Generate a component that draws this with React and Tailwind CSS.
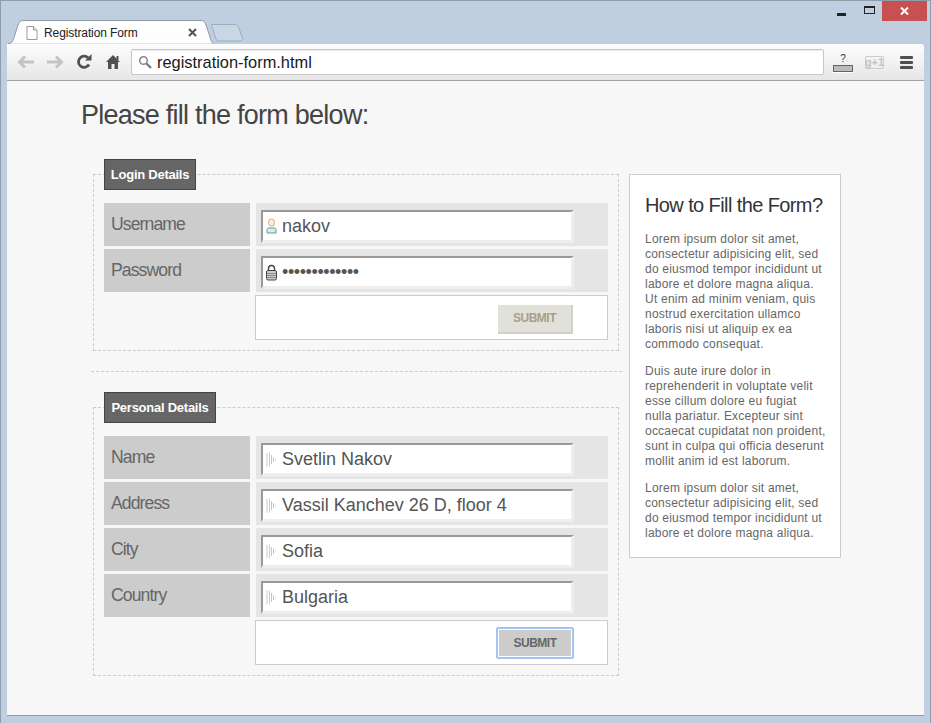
import React from "react";

const arial = "font-['Liberation_Sans',Arial,sans-serif]";

function UserIcon() {
  return (
    <svg width="11" height="16" viewBox="0 0 11 16" className="shrink-0">
      <ellipse cx="5.5" cy="4.5" rx="3" ry="3.7" fill="#fbeee0" stroke="#e0a878" />
      <path d="M1 15V11.5C1 10.5 2 10 3 10H8C9 10 10 10.500 10 11.500V15Z" fill="#d8ece8" stroke="#5f9c98" />
    </svg>
  );
}

function LockIcon() {
  return (
    <svg width="11" height="17" viewBox="0 0 11 17" className="shrink-0">
      <path d="M2.500 7V4.500C2.500 2.500 3.800 1.500 5.500 1.500S8.500 2.500 8.500 4.500V7" fill="none" stroke="#444" strokeWidth="1.400" />
      <rect x="0.500" y="6.500" width="10" height="9.500" rx="1.500" fill="#ccc" stroke="#444" />
      <path d="M1 9.500H10M1 11.500H10M1 13.500H10" stroke="#888" />
    </svg>
  );
}

function FieldIcon() {
  return (
    <svg width="11" height="15" viewBox="0 0 11 15" className="shrink-0">
      <path d="M1 0.500V14.500M3.500 0.500V14.500" stroke="#ccc" fill="none" />
      <path d="M5.500 3V12M7.500 5V10" stroke="#c4c4c4" fill="none" />
      <path d="M9.500 6.500V8.500" stroke="#ddd" fill="none" />
    </svg>
  );
}

function Row({ label, value, icon, dots }) {
  return (
    <div className="flex h-[43px] gap-[6px]">
      <div className={`w-[146px] bg-[#cccccc] pl-[7px] pt-[10px] text-[17.6px] leading-[22px] tracking-[-0.9px] text-[#666666] ${arial}`}>
        {label}
      </div>
      <div className="w-[352px] bg-[#e5e5e5] pl-[5px] pt-[7px]">
        <div className="flex h-[33px] w-[313px] items-center border-t-2 border-l-2 border-r-[3px] border-b-[3px] border-t-[#999999] border-l-[#999999] border-r-[#eeeeee] border-b-[#eeeeee] bg-white pl-[3px]">
          {icon}
          <span className={`ml-[5px] text-[18px] leading-[24px] text-[#555555] ${arial} ${dots ? "tracking-[-0.4px]" : ""}`}>{value}</span>
        </div>
      </div>
    </div>
  );
}

function Fieldset({ legend, legendWidth, children }) {
  return (
    <fieldset className="ml-[2px] w-[526px] border border-dashed border-[#cccccc] px-[10px] pb-[10px] pt-[13px]">
      <legend className={`flex h-[31px] items-center justify-center border border-[#444444] bg-[#666666] text-[13px] font-bold tracking-[-0.25px] text-white ${legendWidth} ${arial}`}>
        {legend}
      </legend>
      <div className="flex flex-col gap-[3px]">{children}</div>
    </fieldset>
  );
}

function SubmitBox({ focused }) {
  return (
    <div className="ml-[151px] flex h-[45px] w-[353px] items-center justify-end border border-[#cccccc] bg-white pr-[33px]">
      {focused ? (
        <button className={`h-[32px] w-[78px] rounded-[2px] border-2 border-[#a3c3f5] bg-[#cccccc] text-[12px] font-bold tracking-[-0.5px] text-[#666666] outline outline-1 -outline-offset-3 outline-white ${arial}`}>
          SUBMIT
        </button>
      ) : (
        <button className={`mr-[1px] mt-[3px] h-[29px] w-[75px] border-b-2 border-r-2 border-[#d2d1c9] bg-[#e1e0d9] text-[12px] font-bold tracking-[-0.5px] text-[#a89f88] ${arial}`}>
          SUBMIT
        </button>
      )}
    </div>
  );
}

function Tab() {
  return (
    <div className="relative ml-[7px] h-[24px] w-[206px]">
      <svg className="absolute inset-0" width="206" height="24" viewBox="0 0 206 24">
        <defs>
          <linearGradient id="tb" x1="0" y1="0" x2="0" y2="1">
            <stop offset="0" stopColor="#ffffff" />
            <stop offset="1" stopColor="#fdfdfd" />
          </linearGradient>
        </defs>
        <path d="M0 23.500C4 23.500 5 21 6.500 16L10 5C11 2 12.500 0.500 15 0.500H193C196 0.500 197 2 198 5L202 17C203 21 204 23.500 206 23.500" fill="url(#tb)" stroke="#8d99a6" />
      </svg>
      <div className="relative flex h-full items-center pl-[18px] pr-[17px] pt-[1px]">
        <svg width="12" height="14" viewBox="0 0 12 14" className="shrink-0">
          <path d="M1 0.500H7.500L11 4V13.500H1Z" fill="#fff" stroke="#999" />
          <path d="M7.500 0.500V4H11" fill="#eee" stroke="#999" />
        </svg>
        <span className={`ml-[6px] whitespace-nowrap text-[12px] tracking-[-0.1px] text-[#222222] ${arial}`}>Registration Form</span>
        <svg width="9" height="9" viewBox="0 0 9 9" className="ml-auto">
          <path d="M1 1L8 8M8 1L1 8" stroke="#555" strokeWidth="2" />
        </svg>
      </div>
    </div>
  );
}

export default function App() {
  return (
    <div className={`flex h-[723px] w-[931px] flex-col overflow-hidden border border-b-0 border-[#8f9dab] bg-[#bfcfdf] ${arial}`}>
      <div className="relative flex h-[43px] items-end">
        <Tab />
        <svg width="34" height="18" viewBox="0 0 34 18" className="mb-[2px] -ml-[3px]">
          <path d="M0.500 0.500H24C26 0.500 26.500 1.500 27.500 3L31.500 14C32 16 31 17 29 17H8C6 17 5.500 16 4.500 14Z" fill="#c9d6e3" stroke="#9fadbb" />
        </svg>
        <div className="absolute right-[3px] top-0 flex items-center">
          <svg width="9" height="3" viewBox="0 0 9 3" className="mt-[7px]"><rect width="9" height="3" fill="#222" /></svg>
          <svg width="11" height="8" viewBox="0 0 11 8" className="ml-[18px] -mt-[2px]"><rect x="0.500" y="0.500" width="10" height="7" fill="none" stroke="#222" /><rect x="0" y="0" width="11" height="2" fill="#222" /></svg>
          <div className="ml-[7px] flex h-[20px] w-[45px] items-center justify-center bg-[#c75050]">
            <svg width="9" height="8" viewBox="0 0 9 8"><path d="M1 0.500L8 7.500M8 0.500L1 7.500" stroke="#fff" strokeWidth="2" /></svg>
          </div>
        </div>
      </div>

      <div className="mx-[6px] flex h-[37px] w-[917px] items-center rounded-tr-[3px] border-b border-[#a0a0a0] bg-gradient-to-b from-[#fdfdfd] to-[#e6e6e6]">
        <svg width="18" height="14" viewBox="0 0 18 14" className="ml-[10px]"><path d="M8 1.500L2.500 7L8 12.500M3 7H17" fill="none" stroke="#c4c4c4" strokeWidth="3" /></svg>
        <svg width="18" height="14" viewBox="0 0 18 14" className="ml-[11px]"><path d="M10 1.500L15.500 7L10 12.500M15 7H1" fill="none" stroke="#c4c4c4" strokeWidth="3" /></svg>
        <svg width="16" height="16" viewBox="0 0 16 16" className="ml-[12px]"><path d="M13 10.500A5.600 5.600 0 1 1 12 3.800" fill="none" stroke="#505050" strokeWidth="2.800" /><path d="M9 6.500H15.500V0Z" fill="#505050" /></svg>
        <svg width="14" height="14" viewBox="0 0 14 14" className="ml-[14px]"><path d="M7 0L14 7H12V14H8.500V9H5.500V14H2V7H0Z" fill="#505050" /><rect x="10.500" y="1" width="2" height="4" fill="#505050" /></svg>
        <div className="ml-[11px] flex h-[26px] w-[693px] items-center rounded-[2px] border border-[#c6c6c6] bg-white pl-[6px] shadow-[inset_0_1px_1px_#eeeeee]">
          <svg width="14" height="14" viewBox="0 0 14 14"><circle cx="5.500" cy="5.500" r="3.800" fill="none" stroke="#888" strokeWidth="1.500" /><path d="M8.500 8.500L13 13" stroke="#777" strokeWidth="2.200" /></svg>
          <span className="ml-[5px] text-[16.4px] text-[#1a1a1a]">registration-form.html</span>
        </div>
        <div className="ml-[9px] flex w-[20px] flex-col items-center">
          <span className="h-[13px] text-[10px] leading-[13px] text-[#333333]">?</span>
          <div className="h-[7px] w-[20px] border border-[#666666] bg-[#bbbbbb] shadow-[0_1px_0_#ffffff]"></div>
        </div>
        <div className="ml-[12px] flex h-[13px] w-[19px] items-center justify-center rounded-[1px] border border-[#cccccc] text-[11px] leading-none font-bold text-[#c4c4c4]">g+1</div>
        <div className="ml-[16px] flex w-[13px] flex-col gap-[2px]">
          <div className="h-[3px] rounded-[1px] bg-[#505050]"></div>
          <div className="h-[3px] rounded-[1px] bg-[#505050]"></div>
          <div className="h-[3px] rounded-[1px] bg-[#505050]"></div>
        </div>
      </div>

      <div className="mx-[6px] mb-[7px] h-[635px] w-[917px] border-b border-[#999999] bg-[#f7f7f7] pl-[74px]">
        <h1 className="pt-[16px] text-[27px] leading-[36px] tracking-[-0.75px] text-[#444444]">Please fill the form below:</h1>
        <div className="mt-[26px] flex">
          <div className="ml-[10px] w-[531px]">
            <Fieldset legend="Login Details" legendWidth="w-[92px]">
              <Row label="Username" value="nakov" icon={<UserIcon />} />
              <Row label="Password" value="•••••••••••••" icon={<LockIcon />} dots />
              <SubmitBox />
            </Fieldset>
            <div className="my-[20px] border-t border-dashed border-[#cccccc]"></div>
            <Fieldset legend="Personal Details" legendWidth="w-[112px]">
              <Row label="Name" value="Svetlin Nakov" icon={<FieldIcon />} />
              <Row label="Address" value="Vassil Kanchev 26 D, floor 4" icon={<FieldIcon />} />
              <Row label="City" value="Sofia" icon={<FieldIcon />} />
              <Row label="Country" value="Bulgaria" icon={<FieldIcon />} />
              <SubmitBox focused />
            </Fieldset>
          </div>
          <aside className="ml-[7px] mt-[15px] h-[384px] w-[212px] whitespace-nowrap border border-[#cccccc] bg-white px-[15px] pt-[18px] text-[12px] leading-[15px] tracking-[0.22px] text-[#666666]">
            <h2 className="text-[20px] leading-[24px] tracking-[-0.6px] text-[#333333]">How to Fill the Form?</h2>
            <p className="mt-[15px]">
              Lorem ipsum dolor sit amet,<br />consectetur adipisicing elit, sed<br />do eiusmod tempor incididunt ut<br />labore et dolore magna aliqua.<br />Ut enim ad minim veniam, quis<br />nostrud exercitation ullamco<br />laboris nisi ut aliquip ex ea<br />commodo consequat.
            </p>
            <p className="mt-[12px]">
              Duis aute irure dolor in<br />reprehenderit in voluptate velit<br />esse cillum dolore eu fugiat<br />nulla pariatur. Excepteur sint<br />occaecat cupidatat non proident,<br />sunt in culpa qui officia deserunt<br />mollit anim id est laborum.
            </p>
            <p className="mt-[12px]">
              Lorem ipsum dolor sit amet,<br />consectetur adipisicing elit, sed<br />do eiusmod tempor incididunt ut<br />labore et dolore magna aliqua.
            </p>
          </aside>
        </div>
      </div>
    </div>
  );
}
